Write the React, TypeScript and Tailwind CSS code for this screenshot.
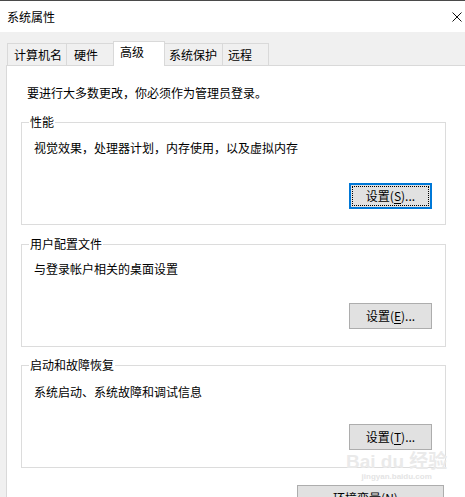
import { ReactNode } from "react";

const font = { fontFamily: '"Noto Sans CJK SC", "Noto Sans", sans-serif' };

interface TabProps {
  label: string;
  className: string;
}

function Tab({ label, className }: TabProps) {
  return (
    <div className={`h-[22px] bg-[#f0f0f0] border-t border-[#d9d9d9] flex items-center text-[12px] leading-[16px] ${className}`}>
      {label}
    </div>
  );
}

interface GroupBoxProps {
  title: string;
  desc: string;
  button: ReactNode;
  descTop: string;
  buttonTop: string;
  className?: string;
}

function SettingsButton({ hotkey, focused }: { hotkey: string; focused?: boolean }) {
  return (
    <div
      className={
        focused
          ? "w-[83px] h-[26px] bg-[#e1e1e1] border-2 border-[#0078d7] outline-1 outline-dotted outline-black outline-offset-[-4px] flex items-center justify-center text-[12px] leading-[16px]"
          : "w-[83px] h-[26px] bg-[#e1e1e1] border border-[#adadad] flex items-center justify-center text-[12px] leading-[16px]"
      }
    >
      设置(<span className="underline underline-offset-2">{hotkey}</span>)...
    </div>
  );
}

function GroupBox({ title, desc, button, descTop, buttonTop, className }: GroupBoxProps) {
  return (
    <div className={`relative ml-[14px] w-[425px] h-[103px] border border-[#dcdcdc] ${className ?? ""}`}>
      <div className="absolute -top-[9px] left-[7px] bg-white px-[1px] text-[12px] leading-[16px]">{title}</div>
      <div className={`ml-[12px] text-[12px] leading-[16px] ${descTop}`}>{desc}</div>
      <div className={`flex justify-end pr-[13px] ${buttonTop}`}>{button}</div>
    </div>
  );
}

export default function App() {
  return (
    <div className="relative w-[465px] h-[497px] overflow-hidden bg-[#f0f0f0] text-black" style={font}>
      <div className="h-[1px] bg-[#4a4a4a]" />
      {/* title bar */}
      <div className="h-[31px] bg-white flex items-center justify-between pl-[7px] pr-[2px]">
        <span className="text-[12px] leading-[16px]">系统属性</span>
        <svg width="10" height="10" viewBox="0 0 10 10" className="mr-[1px]">
          <path d="M0.5 0.5 L9.5 9.5 M9.5 0.5 L0.5 9.5" stroke="#111" strokeWidth="1" fill="none" />
        </svg>
      </div>

      {/* tabs */}
      <div className="flex items-end ml-[7px] pt-[9px]">
        <Tab label="计算机名" className="w-[59px] border-l pl-[6px]" />
        <Tab label="硬件" className="w-[47px] border-l pl-[7px]" />
        <div className="relative z-10 -mb-[1px] w-[52px] h-[25px] bg-white border-t border-x border-[#d9d9d9] pl-[6px] pb-[4px] flex items-center text-[12px] leading-[16px]">
          高级
        </div>
        <Tab label="系统保护" className="w-[57px] pl-[4px]" />
        <Tab label="远程" className="w-[47px] border-x pl-[5px]" />
      </div>

      {/* panel */}
      <div className="ml-[6px] h-[440px] bg-white border-l border-t border-[#d9d9d9] flow-root">
        <div className="ml-[20px] mt-[19px] text-[12px] leading-[16px]">要进行大多数更改，你必须作为管理员登录。</div>

        <GroupBox
          className="mt-[21px]"
          title="性能"
          desc="视觉效果，处理器计划，内存使用，以及虚拟内存"
          descTop="mt-[17px]"
          buttonTop="mt-[27px]"
          button={<SettingsButton hotkey="S" focused />}
        />
        <GroupBox
          className="mt-[19px]"
          title="用户配置文件"
          desc="与登录帐户相关的桌面设置"
          descTop="mt-[16px]"
          buttonTop="mt-[26px]"
          button={<SettingsButton hotkey="E" />}
        />
        <GroupBox
          className="mt-[18px]"
          title="启动和故障恢复"
          desc="系统启动、系统故障和调试信息"
          descTop="mt-[18px]"
          buttonTop="mt-[24px]"
          button={<SettingsButton hotkey="T" />}
        />

        <div className="ml-[290px] mt-[17px] w-[147px] h-[26px] bg-[#e1e1e1] border border-[#adadad] flex items-center justify-center text-[12px] leading-[16px]">
          环境变量(<span className="underline underline-offset-2">N</span>)...
        </div>
      </div>

      {/* watermark */}
      <div className="absolute left-[346px] top-[452px] flex flex-col items-center pointer-events-none select-none">
        <span className="text-[19px] leading-[20px] font-bold text-[#eaeaea]" style={{ fontFamily: '"Liberation Sans", "Noto Sans CJK SC", sans-serif' }}>
          Bai du 经验
        </span>
        <span className="text-[8px] leading-[10px] font-bold text-[#e4e4e4]" style={{ fontFamily: '"Liberation Sans", sans-serif' }}>
          jingyan.baidu.com
        </span>
      </div>
    </div>
  );
}
